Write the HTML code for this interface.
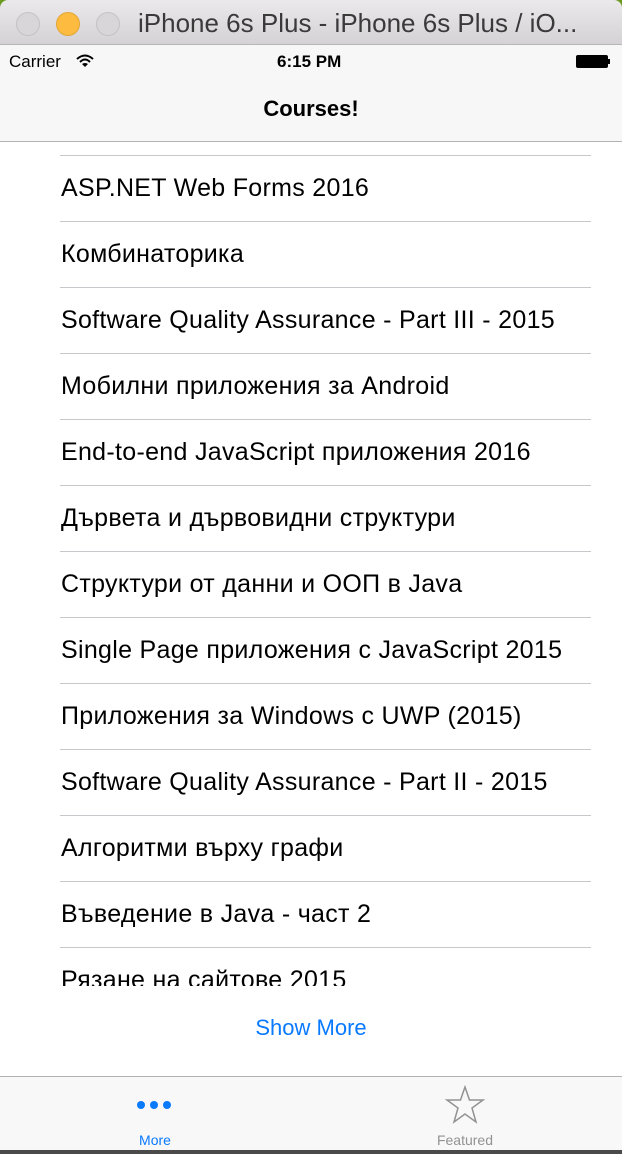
<!DOCTYPE html>
<html><head><meta charset="utf-8"><style>
*{margin:0;padding:0;box-sizing:border-box}
body{width:622px;height:1154px;overflow:hidden;background:#4a4a4a;font-family:"Liberation Sans","DejaVu Sans",sans-serif;position:relative}
.green{position:absolute;left:0;top:0;width:622px;height:10px;background:#6a9a20}
.title{position:absolute;left:0;top:0;width:622px;height:45px;background:linear-gradient(#ebe9eb,#d4d2d4);border-radius:8px 8px 0 0;border-bottom:1px solid #b8b6b8}
.dot{position:absolute;top:12px;width:24px;height:24px;border-radius:50%;background:#d8d6d8;border:1px solid #c4c2c4}
.ttxt{position:absolute;left:138px;top:8px;font-size:26px;color:#3a3a3a;white-space:nowrap}
.screen{position:absolute;left:0;top:45px;width:622px;height:1105px;background:#fff;overflow:hidden}
.status{position:absolute;top:0;left:0;width:622px;height:32px;background:#f7f7f7;font-size:17px}
.nav{position:absolute;top:32px;left:0;width:622px;height:65px;background:#f7f7f7;border-bottom:1px solid #b2b2b2;text-align:center;font-weight:bold;font-size:22px;line-height:64px}
.list{position:absolute;top:98px;left:0;width:622px;height:843px;overflow:hidden}
.row{position:absolute;left:61px;font-size:25px;letter-spacing:0.3px;color:#000;white-space:nowrap}
.sep{position:absolute;left:60px;width:531px;height:1px;background:#c8c7cc}
.tab{position:absolute;top:1031px;left:0;width:622px;height:74px;background:#f8f8f8;border-top:1px solid #b2b2b2}
</style></head><body>
<div class="green"></div>
<div class="title">
<div class="dot" style="left:16px"></div>
<div class="dot" style="left:56px;background:#fdbc40;border-color:#e2a638"></div>
<div class="dot" style="left:96px"></div>
<div class="ttxt">iPhone 6s Plus - iPhone 6s Plus / iO...</div>
</div>
<div class="screen">
<div class="status">
<span style="position:absolute;left:9px;top:7px">Carrier</span>
<svg style="position:absolute;left:76px;top:9px" width="18" height="14" viewBox="0 0 18 14"><path d="M1 5 Q9 -2 17 5" stroke="#000" stroke-width="2" fill="none"/><path d="M4 8 Q9 3 14 8" stroke="#000" stroke-width="2" fill="none"/><path d="M9 13 L6 10 Q9 8 12 10Z" fill="#000"/></svg>
<span style="position:absolute;left:277px;top:7px;font-weight:bold">6:15 PM</span>
<div style="position:absolute;left:576px;top:10px;width:32px;height:13px;background:#000;border-radius:2px"></div>
<div style="position:absolute;left:608px;top:14px;width:2px;height:5px;background:#000"></div>
</div>
<div class="nav">Courses!</div>
<div class="list">
<div class="sep" style="top:12px"></div>
<div class="row" style="top:31px">ASP.NET Web Forms 2016</div>
<div class="sep" style="top:78px"></div>
<div class="row" style="top:97px">Комбинаторика</div>
<div class="sep" style="top:144px"></div>
<div class="row" style="top:163px">Software Quality Assurance - Part III - 2015</div>
<div class="sep" style="top:210px"></div>
<div class="row" style="top:229px">Мобилни приложения за Android</div>
<div class="sep" style="top:276px"></div>
<div class="row" style="top:295px">End-to-end JavaScript приложения 2016</div>
<div class="sep" style="top:342px"></div>
<div class="row" style="top:361px">Дървета и дървовидни структури</div>
<div class="sep" style="top:408px"></div>
<div class="row" style="top:427px">Структури от данни и ООП в Java</div>
<div class="sep" style="top:474px"></div>
<div class="row" style="top:493px">Single Page приложения с JavaScript 2015</div>
<div class="sep" style="top:540px"></div>
<div class="row" style="top:559px">Приложения за Windows с UWP (2015)</div>
<div class="sep" style="top:606px"></div>
<div class="row" style="top:625px">Software Quality Assurance - Part II - 2015</div>
<div class="sep" style="top:672px"></div>
<div class="row" style="top:691px">Алгоритми върху графи</div>
<div class="sep" style="top:738px"></div>
<div class="row" style="top:757px">Въведение в Java - част 2</div>
<div class="sep" style="top:804px"></div>
<div class="row" style="top:823px">Рязане на сайтове 2015</div>
</div>
<div style="position:absolute;top:970px;left:0;width:622px;text-align:center;font-size:22px;color:#0a7aff">Show More</div>
<div class="tab">
<div style="position:absolute;left:137px;top:24px;width:8px;height:8px;border-radius:50%;background:#0a7aff"></div>
<div style="position:absolute;left:150px;top:24px;width:8px;height:8px;border-radius:50%;background:#0a7aff"></div>
<div style="position:absolute;left:163px;top:24px;width:8px;height:8px;border-radius:50%;background:#0a7aff"></div>
<div style="position:absolute;left:105px;top:55px;width:100px;text-align:center;font-size:14px;color:#0a7aff">More</div>
<svg style="position:absolute;left:445px;top:8px" width="40" height="40" viewBox="0 0 40 40"><path d="M20 2 L24.5 15 L38 15 L27 23 L31 37 L20 29 L9 37 L13 23 L2 15 L15.5 15 Z" fill="none" stroke="#929292" stroke-width="1.5"/></svg>
<div style="position:absolute;left:415px;top:55px;width:100px;text-align:center;font-size:14px;color:#929292">Featured</div>
</div>
</div>
</body></html>
